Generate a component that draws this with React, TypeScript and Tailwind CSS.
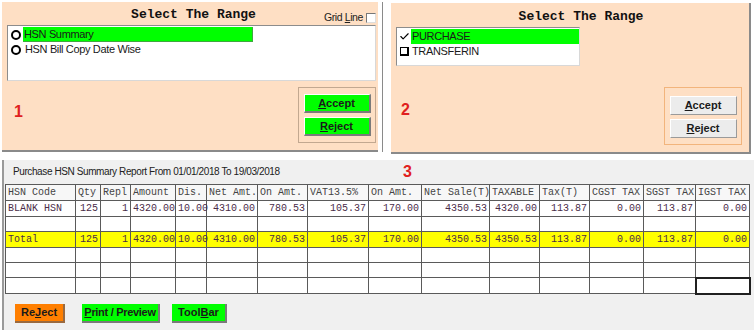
import { Check } from "lucide-react";

const cols = [
  { h: "HSN Code", w: 70 },
  { h: "Qty", w: 25 },
  { h: "Repl", w: 30 },
  { h: "Amount", w: 45 },
  { h: "Dis.", w: 31 },
  { h: "Net Amt.", w: 51 },
  { h: "On Amt.", w: 50 },
  { h: "VAT13.5%", w: 61 },
  { h: "On Amt.", w: 53 },
  { h: "Net Sale(T)", w: 68 },
  { h: "TAXABLE", w: 50 },
  { h: "Tax(T)", w: 50 },
  { h: "CGST TAX", w: 54 },
  { h: "SGST TAX", w: 52 },
  { h: "IGST TAX", w: 54 },
];

const rowBlank = ["BLANK HSN", "125", "1", "4320.00", "10.00", "4310.00", "780.53", "105.37", "170.00", "4350.53", "4320.00", "113.87", "0.00", "113.87", "0.00"];
const rowTotal = ["Total", "125", "1", "4320.00", "10.00", "4310.00", "780.53", "105.37", "170.00", "4350.53", "4350.53", "113.87", "0.00", "113.87", "0.00"];

const mono = "font-['Courier_New','Liberation_Mono',monospace]";
const sans = "font-['Liberation_Sans',Arial,sans-serif]";

function RadioMark() {
  return <span className="inline-block size-[10px] rounded-full border-[2.5px] border-black shrink-0" />;
}

function GreenButton({ first, rest }: { first: string; rest: string }) {
  return (
    <div className={`h-[19px] w-[67px] bg-[#00ff00] border-r-2 border-b-2 border-[#7a7a7a] border-t border-l border-t-white border-l-white flex items-center justify-center text-[11px] font-bold text-[#1a1a1a] ${sans}`}>
      <span className="underline">{first}</span>
      {rest}
    </div>
  );
}

function GrayButton({ first, rest }: { first: string; rest: string }) {
  return (
    <div className={`h-[19px] w-[67px] bg-[#ececec] border border-[#9a9a9a] border-t-white border-l-white flex items-center justify-center text-[11px] font-bold text-[#1a1a1a] ${sans}`}>
      <span className="underline">{first}</span>
      {rest}
    </div>
  );
}

function Row({ cells, bg, h }: { cells: string[]; bg: string; h: string }) {
  return (
    <tr className={`${bg} ${h}`}>
      {cells.map((c, i) => (
        <td key={i} className={`border border-[#5a5a5a] px-[2px] text-[10px] leading-none text-[#4a2c48] ${i === 0 ? "text-left" : "text-right"}`}>
          {c}
        </td>
      ))}
    </tr>
  );
}

function EmptyRow({ h, last }: { h: string; last?: boolean }) {
  return (
    <tr className={`bg-white ${h}`}>
      {cols.map((_, i) => (
        <td
          key={i}
          className={`border border-[#5a5a5a] ${last && i === cols.length - 1 ? "outline-2 outline-[#202020] -outline-offset-1" : ""}`}
        />
      ))}
    </tr>
  );
}

export default function App() {
  return (
    <div className="w-[756px] h-[335px] bg-white overflow-hidden relative">
      <div className="flex items-start pt-[2px] pl-[2px] h-[160px]">
        {/* panel 1 */}
        <div className="w-[376px] h-[150px] bg-[#fedfc4] border-b-2 border-[#8a8a8a] flex flex-col pl-[5px] pr-[2px]">
          <div className="relative h-[23px] flex items-center justify-center pl-[4px]">
            <span className={`${mono} font-bold text-[13px] text-[#111] pt-[3px]`}>Select The Range</span>
            <div className={`absolute right-0 top-[8px] flex items-center gap-[3px] ${sans} text-[10.5px] text-[#222] tracking-[-0.4px]`}>
              <span>
                Grid <span className="underline">L</span>ine
              </span>
              <span className="inline-block size-[10px] bg-white border border-[#777] border-r-[#ddd] border-b-[#ddd]" />
            </div>
          </div>
          <div className="h-[56px] bg-white border border-[#8c8c8c] border-r-[#d8d8d8] border-b-[#d8d8d8] flex flex-col pt-px">
            <div className="h-[15px] flex items-center">
              <div className="w-[15px] flex justify-center"><RadioMark /></div>
              <div className={`w-[230px] h-[15px] bg-[#00ff00] border-b border-r border-[#3fa83f] flex items-center pl-px ${sans} text-[11px] tracking-[-0.35px] text-[#1a1a1a]`}>
                HSN Summary
              </div>
            </div>
            <div className="h-[15px] flex items-center">
              <div className="w-[15px] flex justify-center"><RadioMark /></div>
              <span className={`pl-[2px] ${sans} text-[11px] tracking-[-0.35px] text-[#1a1a1a]`}>HSN Bill Copy Date Wise</span>
            </div>
          </div>
          <div className="flex-1 flex items-start pt-[6px]">
            <span className={`${sans} font-bold text-[16px] text-[#e02020] mt-[13px] ml-[7px]`}>1</span>
            <div className="ml-auto w-[78px] h-[56px] border border-[#c2a890] flex flex-col items-center gap-[4px] pt-[6px]">
              <GreenButton first="A" rest="ccept" />
              <GreenButton first="R" rest="eject" />
            </div>
          </div>
        </div>

        <div className="w-[5px] h-[150px] border-r border-[#8a8a8a] mr-[8px]" />

        {/* panel 2 */}
        <div className="w-[360px] h-[151px] mt-px bg-[#fedfc4] border-b-2 border-r-2 border-[#8a8a8a] flex flex-col px-[5px]">
          <div className="h-[24px] flex items-center justify-center pl-[22px]">
            <span className={`${mono} font-bold text-[13px] text-[#111] pt-[3px]`}>Select The Range</span>
          </div>
          <div className="w-[184px] h-[39px] bg-white border border-[#8c8c8c] border-r-[#d8d8d8] border-b-[#d8d8d8] flex flex-col pt-px">
            <div className="h-[15px] flex items-center">
              <div className="w-[14px] flex justify-center"><Check className="size-[11px] text-black" strokeWidth={2.5} /></div>
              <div className={`flex-1 h-[15px] bg-[#00ff00] flex items-center pl-px ${sans} text-[11px] tracking-[-0.35px] text-[#1a1a1a]`}>
                PURCHASE
              </div>
            </div>
            <div className="h-[15px] flex items-center">
              <div className="w-[14px] flex justify-center">
                <span className="inline-block size-[9px] border border-black border-r-2 border-b-2" />
              </div>
              <span className={`pl-px ${sans} text-[11px] tracking-[-0.35px] text-[#1a1a1a]`}>TRANSFERIN</span>
            </div>
          </div>
          <div className="flex-1 flex items-start pt-[21px]">
            <span className={`${sans} font-bold text-[16px] text-[#e02020] mt-[11px] ml-[5px]`}>2</span>
            <div className="ml-auto mr-[2px] w-[78px] h-[58px] border border-[#f2b47c] flex flex-col items-center gap-[4px] pt-[8px]">
              <GrayButton first="A" rest="ccept" />
              <GrayButton first="R" rest="eject" />
            </div>
          </div>
        </div>
      </div>

      {/* section 3 */}
      <div className="ml-[2px] w-[752px] h-[170px] bg-[#f0f0f0] border-l-2 border-[#9a9a9a] flex flex-col">
        <div className="h-[24px] flex items-center pl-[9px] relative">
          <span className={`${sans} text-[10px] tracking-[-0.4px] text-[#222] -mt-[1px]`}>
            Purchase HSN Summary Report From 01/01/2018 To 19/03/2018
          </span>
          <span className={`absolute left-[399px] top-[4px] ${sans} font-bold text-[16px] leading-none text-[#e02020]`}>3</span>
        </div>
        <table className={`ml-[1px] border-collapse table-fixed ${mono}`} style={{ width: 744 }}>
          <colgroup>
            {cols.map((c, i) => (
              <col key={i} style={{ width: c.w }} />
            ))}
          </colgroup>
          <tbody>
            <tr className="h-[16px] bg-[#f7f7f7]">
              {cols.map((c, i) => (
                <td key={i} className="border border-[#5a5a5a] px-[2px] text-[10px] leading-none text-[#444] text-left whitespace-nowrap overflow-hidden">
                  {c.h}
                </td>
              ))}
            </tr>
            <Row cells={rowBlank} bg="bg-white" h="h-[16px]" />
            <EmptyRow h="h-[15px]" />
            <Row cells={rowTotal} bg="bg-[#ffff00]" h="h-[16px]" />
            <EmptyRow h="h-[15px]" />
            <EmptyRow h="h-[15px]" />
            <EmptyRow h="h-[16px]" last />
          </tbody>
        </table>
        <div className={`flex items-center gap-[17px] pl-[11px] pt-[10px] ${sans} text-[11px] font-bold text-[#1a1a1a]`}>
          <div className="h-[19px] w-[50px] bg-[#ff7f00] border-r-2 border-b-2 border-[#9a6a40] flex items-center justify-center">
            Re<span className="underline">J</span>ect
          </div>
          <div className="h-[19px] w-[78px] bg-[#00ff00] border-r-2 border-b-2 border-[#7a7a7a] flex items-center justify-center tracking-[-0.3px]">
            <span className="underline">P</span>rint / Preview
          </div>
          <div className="h-[19px] w-[55px] bg-[#00ff00] border-r-2 border-b-2 border-[#7a7a7a] flex items-center justify-center -ml-[5px]">
            Tool<span className="underline">B</span>ar
          </div>
        </div>
      </div>
    </div>
  );
}
